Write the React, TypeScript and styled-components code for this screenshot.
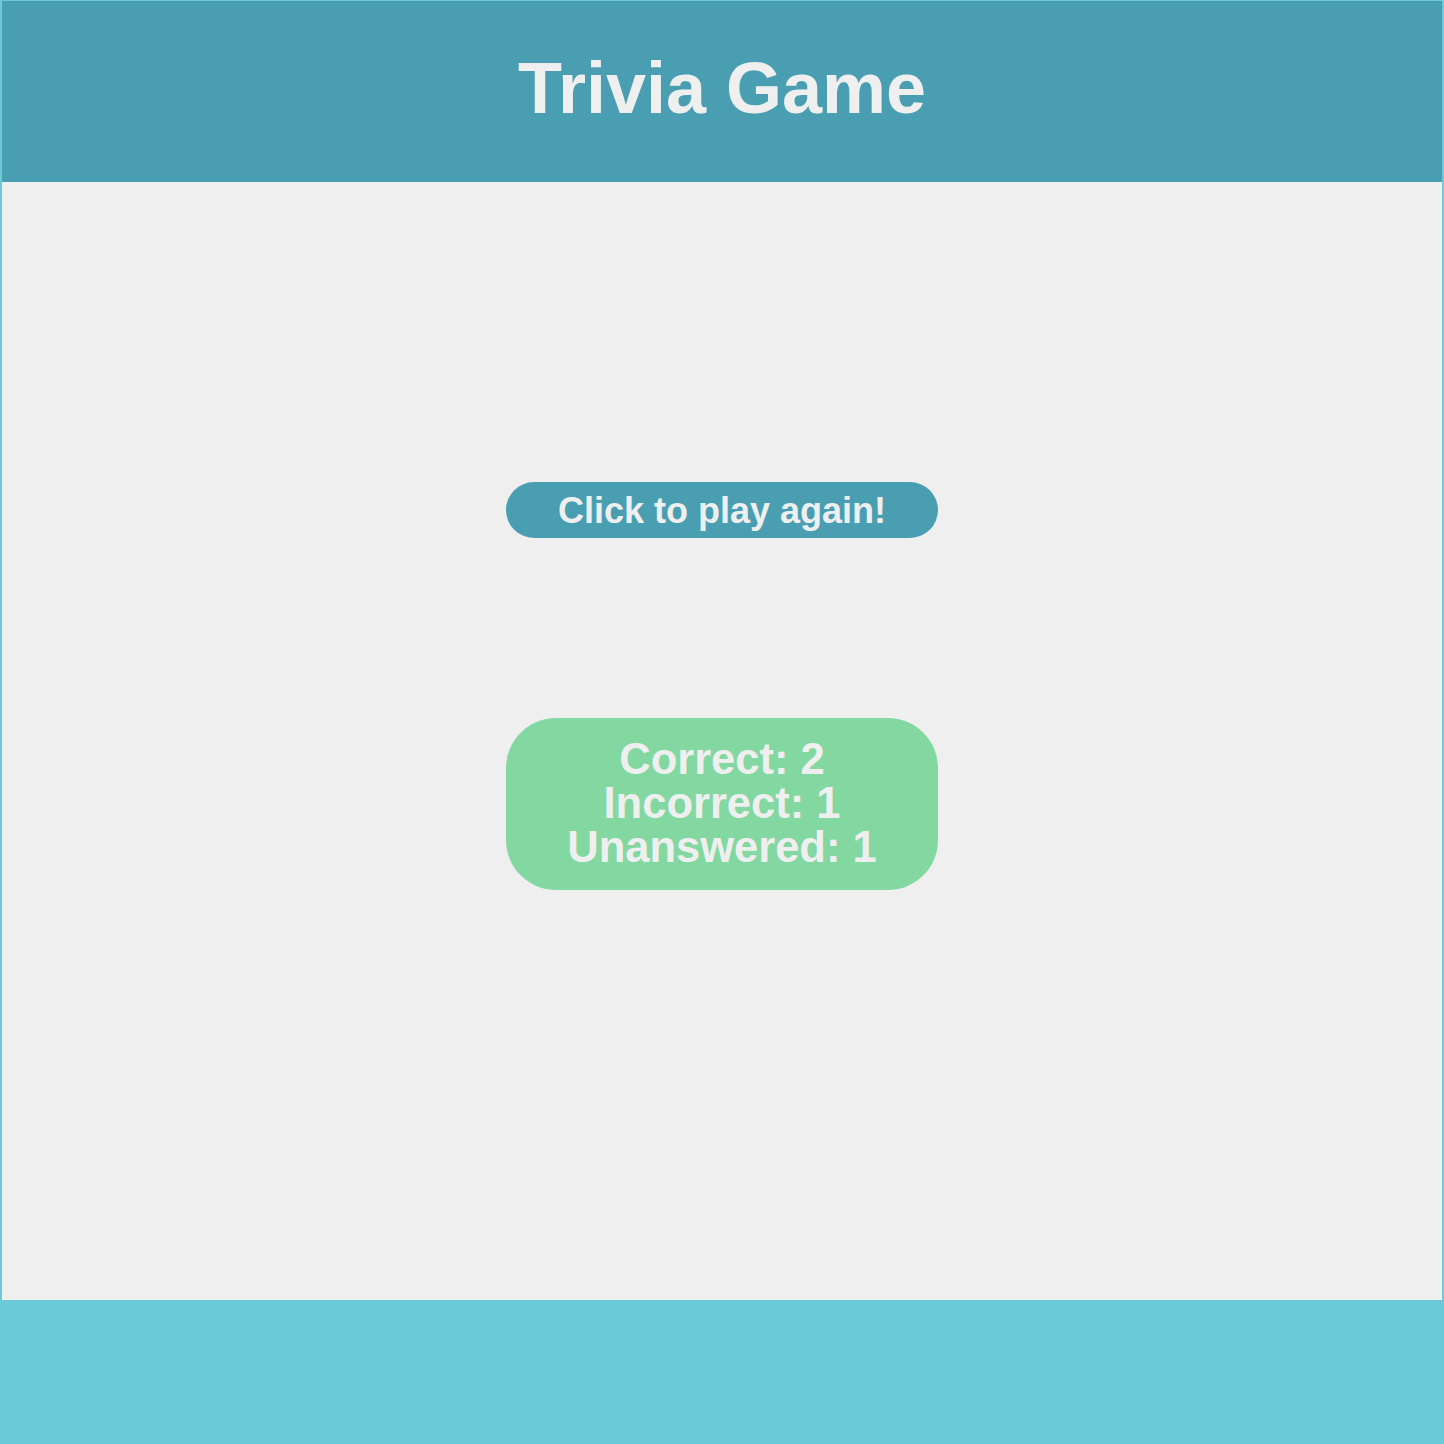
import React from "react";
import styled, { createGlobalStyle } from "styled-components";

const Global = createGlobalStyle`
  html, body {
    margin: 0;
    padding: 0;
    background: #6ccad8;
    font-family: "Liberation Sans", Arial, sans-serif;
  }
  #root {
    min-height: 1444px;
  }
`;

const Page = styled.div`
  margin: 1px 2px 0;
  background: #efefef;
  display: flex;
  flex-direction: column;
`;

const Header = styled.header`
  height: 181px;
  background: #499fb1;
  display: flex;
  align-items: center;
  justify-content: center;
`;

const Title = styled.h1`
  margin: 0;
  padding-bottom: 8px;
  color: #efefef;
  font-size: 72px;
  font-weight: 700;
  line-height: 1;
`;

const Main = styled.main`
  height: 1118px;
  display: flex;
  flex-direction: column;
  align-items: center;
  padding-top: 300px;
  box-sizing: border-box;
  gap: 180px;
`;

const PlayButton = styled.button`
  width: 432px;
  height: 56px;
  border: none;
  border-radius: 28px;
  background: #499fb1;
  color: #efefef;
  font-family: "Liberation Sans", Arial, sans-serif;
  font-weight: 700;
  font-size: 36px;
  padding: 1px 0 0;
  cursor: pointer;
`;

const Score = styled.div`
  width: 432px;
  box-sizing: border-box;
  padding: 19px 0 21px;
  border-radius: 50px;
  background: #83d8a1;
  color: #efefef;
  display: flex;
  flex-direction: column;
  align-items: center;
`;

const ScoreLine = styled.div`
  font-size: 43.5px;
  font-weight: 700;
  line-height: 44px;
`;

export default function App() {
  return (
    <>
      <Global />
      <Page>
        <Header>
          <Title>Trivia Game</Title>
        </Header>
        <Main>
          <PlayButton>Click to play again!</PlayButton>
          <Score>
            <ScoreLine>Correct: 2</ScoreLine>
            <ScoreLine>Incorrect: 1</ScoreLine>
            <ScoreLine>Unanswered: 1</ScoreLine>
          </Score>
        </Main>
      </Page>
    </>
  );
}
